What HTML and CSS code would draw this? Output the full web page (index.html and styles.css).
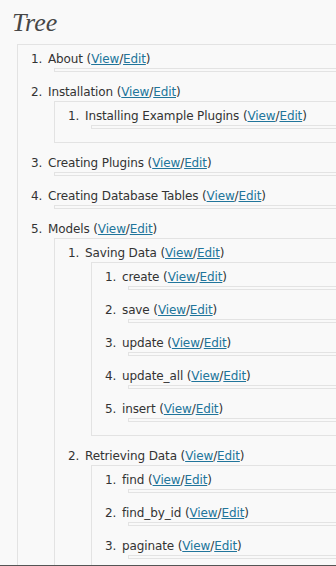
FILE: index.html
```html
<!DOCTYPE html>
<html lang="en">
<head>
  <meta charset="UTF-8">
  <meta name="viewport" content="width=device-width, initial-scale=1.0">
  <title>Tree</title>
  <link rel="stylesheet" href="styles.css">
</head>
<body>
  <div class="wrap">
    <h1 class="page-title">Tree</h1>

    <ol class="tree">
      <li>About (<a href="#">View</a>/<a href="#">Edit</a>)<ol class="children"></ol></li>
      <li>Installation (<a href="#">View</a>/<a href="#">Edit</a>)
        <ol class="children">
          <li>Installing Example Plugins (<a href="#">View</a>/<a href="#">Edit</a>)<ol class="children"></ol></li>
        </ol>
      </li>
      <li>Creating Plugins (<a href="#">View</a>/<a href="#">Edit</a>)<ol class="children"></ol></li>
      <li>Creating Database Tables (<a href="#">View</a>/<a href="#">Edit</a>)<ol class="children"></ol></li>
      <li>Models (<a href="#">View</a>/<a href="#">Edit</a>)
        <ol class="children">
          <li>Saving Data (<a href="#">View</a>/<a href="#">Edit</a>)
            <ol class="children">
              <li>create (<a href="#">View</a>/<a href="#">Edit</a>)<ol class="children"></ol></li>
              <li>save (<a href="#">View</a>/<a href="#">Edit</a>)<ol class="children"></ol></li>
              <li>update (<a href="#">View</a>/<a href="#">Edit</a>)<ol class="children"></ol></li>
              <li>update_all (<a href="#">View</a>/<a href="#">Edit</a>)<ol class="children"></ol></li>
              <li>insert (<a href="#">View</a>/<a href="#">Edit</a>)<ol class="children"></ol></li>
            </ol>
          </li>
          <li>Retrieving Data (<a href="#">View</a>/<a href="#">Edit</a>)
            <ol class="children">
              <li>find (<a href="#">View</a>/<a href="#">Edit</a>)<ol class="children"></ol></li>
              <li>find_by_id (<a href="#">View</a>/<a href="#">Edit</a>)<ol class="children"></ol></li>
              <li>paginate (<a href="#">View</a>/<a href="#">Edit</a>)<ol class="children"></ol></li>
            </ol>
          </li>
        </ol>
      </li>
    </ol>
  </div>

  <div class="frame-edge"></div>
</body>
</html>
```

FILE: styles.css
```css
html {
  overflow: hidden;
}
body {
  margin: 0;
  background: #f9f9f9;
  color: #333;
  font-family: "DejaVu Sans", sans-serif;
  font-size: 12px;
  letter-spacing: -0.12px;
}
.wrap {
  padding-left: 12px;
}
.page-title {
  margin: 8px 0 6px;
  font-family: "Liberation Serif", serif;
  font-style: italic;
  font-weight: normal;
  font-size: 26px;
  line-height: 30px;
  letter-spacing: 0;
  color: #464646;
}
.tree,
.children {
  margin: 0;
  padding: 6px 0 1px 30px;
  border: 1px solid #e3e3e3;
  border-right: none;
}
.tree {
  margin-left: 5px;
  border-bottom: none;
}
.children {
  margin-left: 6px;
}
.children:empty {
  height: 2px;
  padding: 0;
}
li {
  line-height: 17px;
  margin-bottom: 12px;
}
li::marker {
  content: counter(list-item) ".\2002";
}
a {
  color: #21759b;
}
.frame-edge {
  position: fixed;
  left: 0;
  right: 0;
  bottom: 0;
  height: 1px;
  background: #555;
}
```
